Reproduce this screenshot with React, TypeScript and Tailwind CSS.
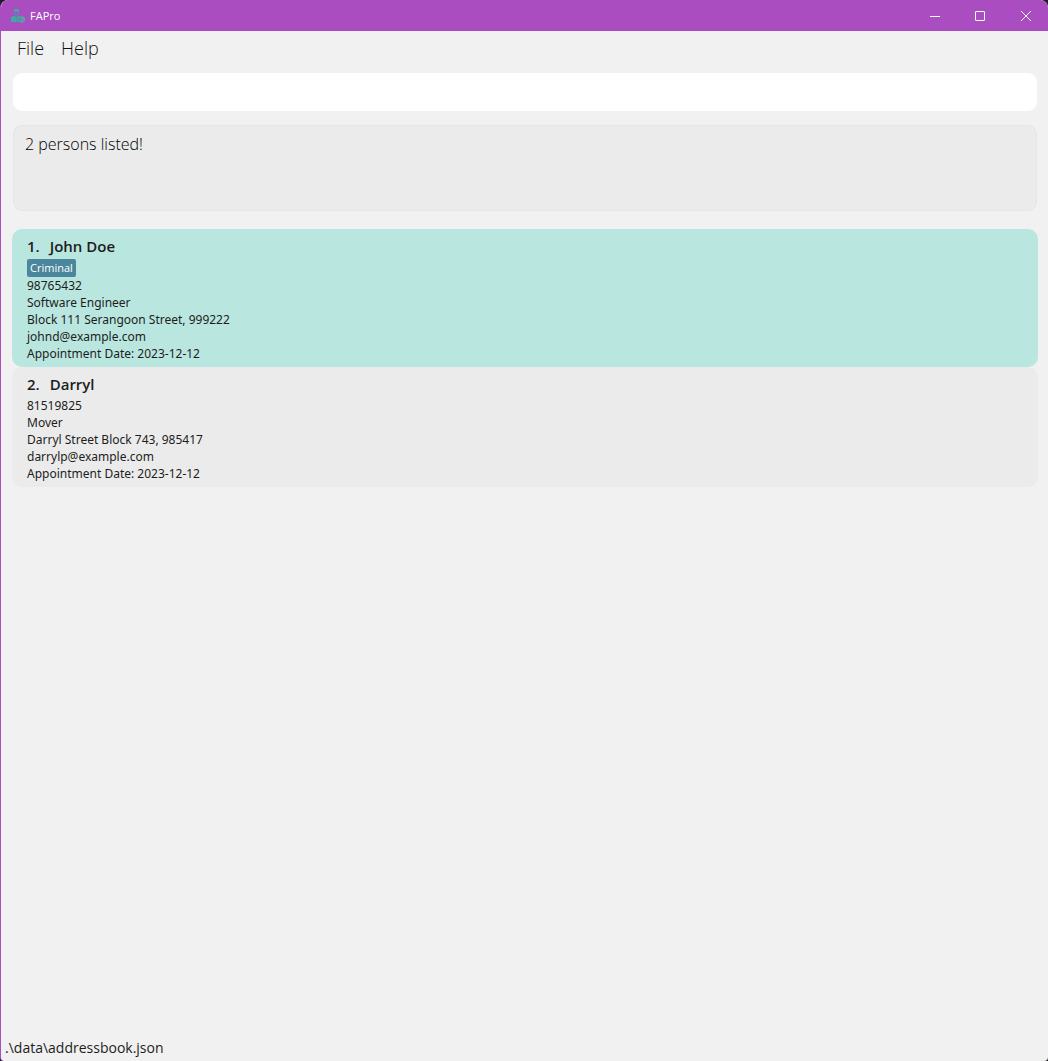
type Person = {
  name: string;
  tags: string[];
  phone: string;
  occupation: string;
  address: string;
  email: string;
  appointment: string;
  selected?: boolean;
};

const people: Person[] = [
  {
    name: "John Doe",
    tags: ["Criminal"],
    phone: "98765432",
    occupation: "Software Engineer",
    address: "Block 111 Serangoon Street, 999222",
    email: "johnd@example.com",
    appointment: "2023-12-12",
    selected: true,
  },
  {
    name: "Darryl",
    tags: [],
    phone: "81519825",
    occupation: "Mover",
    address: "Darryl Street Block 743, 985417",
    email: "darrylp@example.com",
    appointment: "2023-12-12",
  },
];

function AppIcon() {
  return (
    <svg width="14" height="14" viewBox="0 0 14 14" aria-hidden="true">
      <path d="M2.600 2.800 2.900 1 4.200.1h3L8 1l.1 2.100-.8.200-.5-1.300-2.700.2-.7 1.100Z" fill="#2cb5a0" />
      <path d="M3.300 2.800v1.400c0 1.200.9 2 2 2s2-.8 2-2V2.800" fill="#8763ba" stroke="#459fa8" strokeWidth=".8" />
      <path d="M0 13V9.400C0 8 1.300 7.200 3.700 6.700L5.300 8.200 7 6.700l2.300.8L8.500 9l.2 4Z" fill="#3bb0a0" />
      <path d="M4.200 7.500 6.200 13M6.900 7.500 4.800 10.500M2 10v3M7.300 9.500v2" stroke="#6d74b0" strokeWidth=".6" fill="none" />
      <path d="M9 9.200c.6-1.400 2.800-1.900 3.900-.5 1 1.400.6 3.500-.8 4.200-1.300.5-2.600 0-3.100-1.100M10.700 8v5M12 9v3" stroke="#45b0a4" strokeWidth="1.1" fill="none" />
    </svg>
  );
}

function TitleBar() {
  return (
    <header className="flex h-[31px] shrink-0 items-center bg-[#a94dc1] pl-[10px] text-white">
      <AppIcon />
      <h1 className="ml-[5px] text-[11px] leading-4">FAPro</h1>
      <div className="ml-auto flex h-full">
        <button type="button" aria-label="Minimize" className="flex w-[45px] items-center justify-center">
          <svg width="10" height="10" viewBox="0 0 10 10" stroke="currentColor">
            <path d="M0 5.500h10" />
          </svg>
        </button>
        <button type="button" aria-label="Maximize" className="flex w-[46px] items-center justify-center">
          <svg width="10" height="10" viewBox="0 0 10 10" stroke="currentColor" fill="none">
            <rect x=".5" y=".5" width="9" height="9" rx=".5" />
          </svg>
        </button>
        <button type="button" aria-label="Close" className="flex w-[45px] items-center justify-center">
          <svg width="10" height="10" viewBox="0 0 10 10" stroke="currentColor">
            <path d="M0 0l10 10M10 0L0 10" />
          </svg>
        </button>
      </div>
    </header>
  );
}

function PersonCard({ person, index }: { person: Person; index: number }) {
  return (
    <li
      className={`rounded-[10px] px-[15px] py-[5px] font-['Noto_Sans','Open_Sans',sans-serif] text-[12px] leading-[17px] text-[#1d1d1d] ${
        person.selected ? "bg-[#b9e6df]" : "bg-[#ebebeb]"
      }`}
    >
      <h2 className="flex gap-[10px] font-['Open_Sans','Noto_Sans',sans-serif] text-[15px] leading-6 font-semibold">
        <span>{index}.</span>
        <span>{person.name}</span>
      </h2>
      <div className="flex gap-1 pt-px">
        {person.tags.map((tag) => (
          <span
            key={tag}
            className="rounded-[2px] bg-[#4a869c] px-[3px] font-['Open_Sans','Noto_Sans',sans-serif] text-[11px] leading-[18px] text-white"
          >
            {tag}
          </span>
        ))}
      </div>
      <p>{person.phone}</p>
      <p>{person.occupation}</p>
      <p>{person.address}</p>
      <p>{person.email}</p>
      <p>Appointment Date: {person.appointment}</p>
    </li>
  );
}

export default function App() {
  return (
    <div className="min-h-screen bg-[#241a28] font-['Open_Sans','Noto_Sans',sans-serif]">
      <div className="flex min-h-screen flex-col overflow-hidden rounded-t-lg rounded-b border-l border-[#a94dc1] bg-[#f1f1f1]">
        <TitleBar />
        <nav className="flex gap-[17px] px-4 pt-1 text-[18px] leading-[26px] font-light text-[#111]">
          <button type="button">File</button>
          <button type="button">Help</button>
        </nav>
        <main className="flex grow flex-col pr-[10px] pl-[11px]">
          <div className="mt-3 flex flex-col gap-[14px] px-px">
            <input
              type="text"
              aria-label="Command"
              className="h-[38px] w-full rounded-[9px] bg-white px-3 text-[16px] outline-none"
            />
            <textarea
              readOnly
              aria-label="Result"
              defaultValue="2 persons listed!"
              className="h-[86px] w-full resize-none rounded-[9px] border border-[#e5e5e5] bg-[#ebebeb] px-[11px] py-[6px] text-[16px] leading-6 font-light text-black outline-none"
            />
          </div>
          <ul className="mt-[18px]">
            {people.map((person, i) => (
              <PersonCard key={person.name} person={person} index={i + 1} />
            ))}
          </ul>
        </main>
        <footer className="px-1 pb-[3px] text-[14px] leading-5 text-[#1d1d1d]">.\data\addressbook.json</footer>
      </div>
    </div>
  );
}
